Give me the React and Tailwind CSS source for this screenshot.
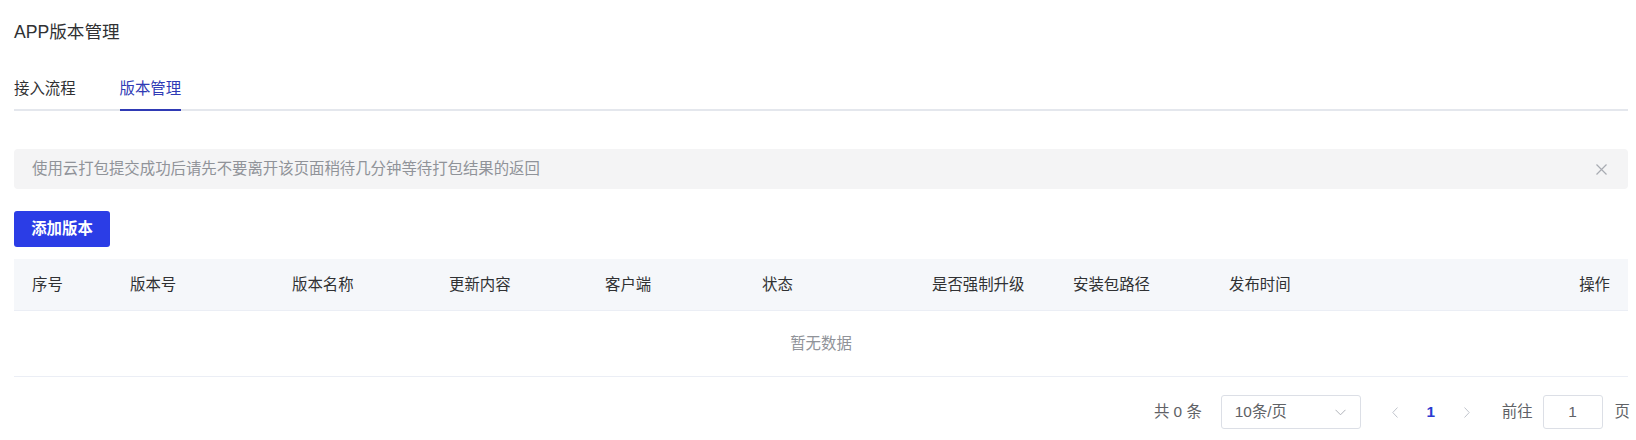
import React, { useState } from "react";

const font = { fontFamily: '"Liberation Sans", "Noto Sans CJK SC", sans-serif' };

const columns = [
  "序号",
  "版本号",
  "版本名称",
  "更新内容",
  "客户端",
  "状态",
  "是否强制升级",
  "安装包路径",
  "发布时间",
];

const App = () => {
  const [tab, setTab] = useState("version");
  const [showTip, setShowTip] = useState(true);

  return (
    <div className="min-h-screen bg-white pl-[14px] pr-[8px]" style={font}>
      <div className="pt-[20px] h-[44px] leading-[24px] text-[17.6px] text-[#303133]">
        APP版本管理
      </div>

      <div className="mt-[27px] flex gap-[44px] border-b-2 border-[#e4e7ed]">
        <button
          onClick={() => setTab("flow")}
          className={`h-[40px] -mb-[2px] border-b-2 pb-[2px] text-[15.4px] ${
            tab === "flow" ? "border-[#2f3ab5] text-[#2f3ab5]" : "border-transparent text-[#303133]"
          }`}
        >
          接入流程
        </button>
        <button
          onClick={() => setTab("version")}
          className={`h-[40px] -mb-[2px] border-b-2 pb-[2px] text-[15.4px] ${
            tab === "version" ? "border-[#2f3ab5] text-[#2f3ab5]" : "border-transparent text-[#303133]"
          }`}
        >
          版本管理
        </button>
      </div>

      {showTip ? (
        <div className="mt-[38px] h-[40px] flex items-center justify-between rounded-[4px] bg-[#f4f4f5] pl-[18px] pr-[21px]">
          <span className="text-[15.4px] text-[#909399]">
            使用云打包提交成功后请先不要离开该页面稍待几分钟等待打包结果的返回
          </span>
          <button onClick={() => setShowTip(false)} className="text-[#a8abb2]">
            <svg width="11" height="11" viewBox="0 0 11 11" fill="none" stroke="currentColor" strokeWidth="1.2">
              <path d="M0.5 0.5 L10.5 10.5 M10.5 0.5 L0.5 10.5" />
            </svg>
          </button>
        </div>
      ) : (
        <div className="mt-[38px] h-[40px]" />
      )}

      <button className="mt-[22px] h-[36px] w-[96px] flex items-center justify-center rounded-[3px] bg-[#2b3de6] text-[15.4px] font-bold text-white">
        添加版本
      </button>

      <div className="mt-[12px]">
        <div className="grid grid-cols-[98px_162px_157px_156px_157px_170px_141px_156px_250px_1fr] h-[52px] items-center bg-[#f5f7fa] border-b border-[#ebeef5] text-[15.4px] text-[#303133]">
          {columns.map((c) => (
            <div key={c} className="pl-[18px] whitespace-nowrap">
              {c}
            </div>
          ))}
          <div className="pr-[18px] text-right">操作</div>
        </div>
        <div className="h-[66px] flex items-center justify-center border-b border-[#ebeef5] text-[15.4px] text-[#909399]">
          暂无数据
        </div>
      </div>

      <div className="mt-[18px] -mr-[2px] flex items-center justify-end h-[34px] text-[15.4px] text-[#606266]">
        <span className="whitespace-pre">共 0 条</span>
        <div className="ml-[19px] w-[140px] h-[34px] flex items-center justify-between border border-[#dcdfe6] rounded-[3px] pl-[13px] pr-[14px]">
          <span>10条/页</span>
          <svg width="11" height="7" viewBox="0 0 11 7" fill="none" stroke="#b0b3b9" strokeWidth="1">
            <path d="M0.5 0.8 L5.5 5.8 L10.5 0.8" />
          </svg>
        </div>
        <div className="ml-[16px] flex">
          <button className="w-[36px] h-[34px] flex items-center justify-center text-[#c0c4cc]">
            <svg width="6" height="11" viewBox="0 0 6 11" fill="none" stroke="currentColor" strokeWidth="1">
              <path d="M5.5 0.5 L0.8 5.5 L5.5 10.5" />
            </svg>
          </button>
          <button className="w-[36px] h-[34px] flex items-center justify-center font-bold text-[#2b3ad0]">
            1
          </button>
          <button className="w-[36px] h-[34px] flex items-center justify-center text-[#c0c4cc]">
            <svg width="6" height="11" viewBox="0 0 6 11" fill="none" stroke="currentColor" strokeWidth="1">
              <path d="M0.5 0.5 L5.2 5.5 L0.5 10.5" />
            </svg>
          </button>
        </div>
        <span className="ml-[17px]">前往</span>
        <input
          defaultValue="1"
          className="ml-[10px] w-[60px] h-[34px] border border-[#dcdfe6] rounded-[3px] text-center outline-none text-[#606266]"
        />
        <span className="ml-[12px]">页</span>
      </div>
    </div>
  );
};

export default App;
